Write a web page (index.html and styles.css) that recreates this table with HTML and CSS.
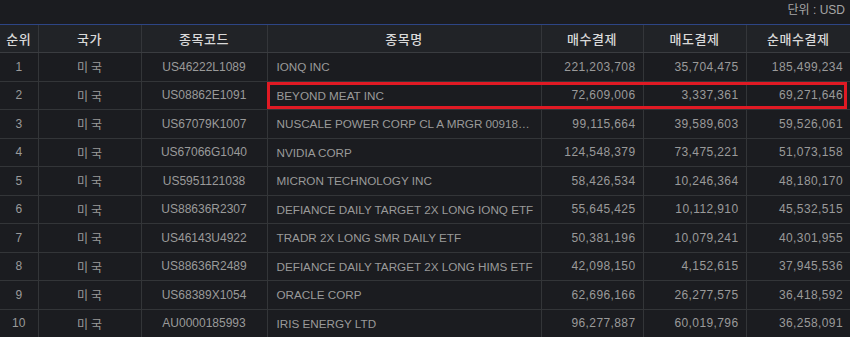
FILE: index.html
```html
<!DOCTYPE html>
<html lang="ko">
<head>
<meta charset="utf-8">
<link rel="stylesheet" href="styles.css">
</head>
<body>
<div class="page">
  <div class="unit">단위 : USD</div>
  <div class="table-wrap">
    <table class="grid">
      <colgroup>
        <col style="width:38px"><col style="width:103px"><col style="width:126px"><col style="width:274px"><col style="width:102px"><col style="width:103px"><col style="width:104px">
      </colgroup>
      <thead>
        <tr><th>순위</th><th>국가</th><th>종목코드</th><th>종목명</th><th>매수결제</th><th>매도결제</th><th>순매수결제</th></tr>
      </thead>
      <tbody>
        <tr><td class="c">1</td><td class="c k">미국</td><td class="c">US46222L1089</td><td class="l">IONQ INC</td><td class="r">221,203,708</td><td class="r">35,704,475</td><td class="r">185,499,234</td></tr>
        <tr><td class="c">2</td><td class="c k">미국</td><td class="c">US08862E1091</td><td class="l">BEYOND MEAT INC</td><td class="r">72,609,006</td><td class="r">3,337,361</td><td class="r">69,271,646</td></tr>
        <tr><td class="c">3</td><td class="c k">미국</td><td class="c">US67079K1007</td><td class="l">NUSCALE POWER CORP CL A MRGR 00918…</td><td class="r">99,115,664</td><td class="r">39,589,603</td><td class="r">59,526,061</td></tr>
        <tr><td class="c">4</td><td class="c k">미국</td><td class="c">US67066G1040</td><td class="l">NVIDIA CORP</td><td class="r">124,548,379</td><td class="r">73,475,221</td><td class="r">51,073,158</td></tr>
        <tr><td class="c">5</td><td class="c k">미국</td><td class="c">US5951121038</td><td class="l">MICRON TECHNOLOGY INC</td><td class="r">58,426,534</td><td class="r">10,246,364</td><td class="r">48,180,170</td></tr>
        <tr><td class="c">6</td><td class="c k">미국</td><td class="c">US88636R2307</td><td class="l">DEFIANCE DAILY TARGET 2X LONG IONQ ETF</td><td class="r">55,645,425</td><td class="r">10,112,910</td><td class="r">45,532,515</td></tr>
        <tr><td class="c">7</td><td class="c k">미국</td><td class="c">US46143U4922</td><td class="l">TRADR 2X LONG SMR DAILY ETF</td><td class="r">50,381,196</td><td class="r">10,079,241</td><td class="r">40,301,955</td></tr>
        <tr><td class="c">8</td><td class="c k">미국</td><td class="c">US88636R2489</td><td class="l">DEFIANCE DAILY TARGET 2X LONG HIMS ETF</td><td class="r">42,098,150</td><td class="r">4,152,615</td><td class="r">37,945,536</td></tr>
        <tr><td class="c">9</td><td class="c k">미국</td><td class="c">US68389X1054</td><td class="l">ORACLE CORP</td><td class="r">62,696,166</td><td class="r">26,277,575</td><td class="r">36,418,592</td></tr>
        <tr><td class="c">10</td><td class="c k">미국</td><td class="c">AU0000185993</td><td class="l">IRIS ENERGY LTD</td><td class="r">96,277,887</td><td class="r">60,019,796</td><td class="r">36,258,091</td></tr>
      </tbody>
    </table>
    <div class="highlight"></div>
  </div>
</div>
</body>
</html>
```

FILE: styles.css
```css
html, body {
  margin: 0;
  padding: 0;
  background: #1b1c20;
}
.page {
  width: 850px;
  height: 337px;
  overflow: hidden;
  font-family: "Liberation Sans", "Noto Sans CJK KR", sans-serif;
}
.unit {
  height: 24px;
  box-sizing: border-box;
  padding: 3px 5px 0 0;
  text-align: right;
  font-size: 12px;
  line-height: 15px;
  color: #a6a6a6;
}
.table-wrap {
  position: relative;
  border-top: 1px solid #2d4585;
}
.grid {
  width: 850px;
  table-layout: fixed;
  border-collapse: collapse;
}
.grid th {
  height: 27px;
  padding: 0;
  background: #212327;
  color: #d9d9d9;
  font-family: "Noto Sans CJK KR", sans-serif;
  font-weight: 500;
  font-size: 13px;
  letter-spacing: 0.5px;
  text-align: center;
  border-left: 1px solid #34363a;
  border-bottom: 1px solid #3a3c40;
}
.grid th:first-child, .grid td:first-child {
  border-left: none;
}
.grid td {
  height: 27.5px;
  padding: 0;
  color: #9a9a9a;
  font-size: 12px;
  white-space: nowrap;
  overflow: hidden;
  border-left: 1px solid #333538;
  border-bottom: 1px solid #333538;
}
.grid td.c { text-align: center; }
.grid td.k { letter-spacing: 3px; text-indent: 3px; }
.grid td.l { text-align: left; padding-left: 9px; font-size: 11.7px; }
.grid td.r { text-align: right; padding-right: 7px; letter-spacing: 0.4px; }
.highlight {
  position: absolute;
  left: 267px;
  top: 57px;
  width: 580px;
  height: 27px;
  box-sizing: border-box;
  border: 3px solid #e01a24;
  pointer-events: none;
}
```
